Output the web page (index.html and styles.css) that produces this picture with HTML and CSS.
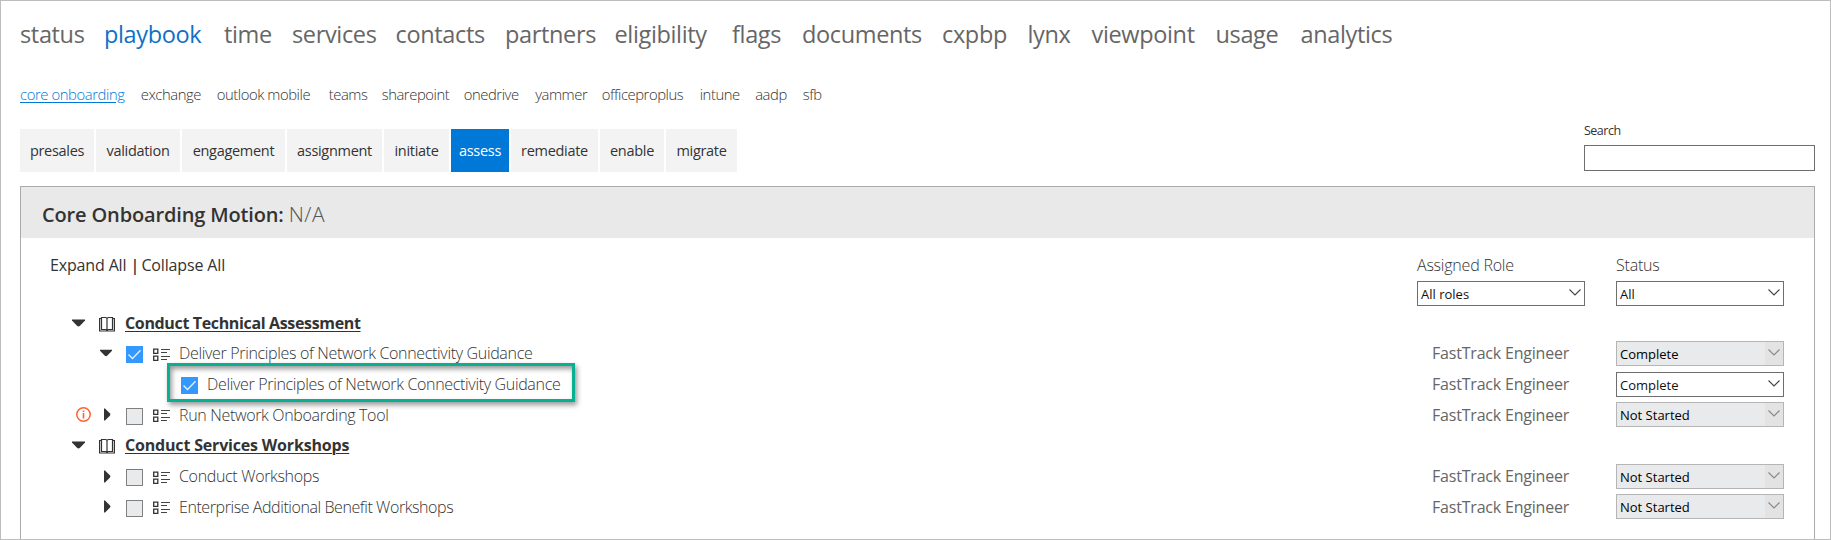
FILE: index.html
```
<!DOCTYPE html>
<html lang="en">
<head>
<meta charset="utf-8">
<title>Playbook</title>
<link rel="stylesheet" href="styles.css">
</head>
<body>
<svg class="defs" width="0" height="0">
  <symbol id="down" viewBox="0 0 13 8"><path d="M0 0.5H13V1.6L8 6.8Q6.5 8 5 6.8L0 1.6Z" fill="#333"/></symbol>
  <symbol id="right" viewBox="0 0 13 13"><path d="M4 .5H5L9.8 5.2Q11 6.5 9.8 7.8L5 12.5H4Z" fill="#333"/></symbol>
  <symbol id="book" viewBox="0 0 16 16"><path d="M2.5 1.5H6.5Q8 1.5 8 3Q8 1.5 9.5 1.5H13.5V13.5H9.5Q8 13.5 8 14.5Q8 13.5 6.5 13.5H2.5ZM8 2V14.5M2.5 2.5H.6V15H15.4V2.5H13.5" fill="none" stroke="#333" stroke-width="1.2"/></symbol>
  <symbol id="list" viewBox="0 0 17 14"><path d="M.7 1.2H4.8V5.3H.7ZM.7 8.2H4.8V12.3H.7Z" fill="none" stroke="#333" stroke-width="1.3"/><path d="M8 1.5H17M8 4.5H14M8 8.5H17M8 11.5H14" stroke="#444" stroke-width="1.1"/></symbol>
  <symbol id="alert" viewBox="0 0 15 15"><circle cx="7.5" cy="7.5" r="6.7" fill="none" stroke="#ff6230" stroke-width="1.5"/><path d="M7.5 3.4V4.9M7.5 5.9V11.6" stroke="#ff6230" stroke-width="1.6"/></symbol>
  <symbol id="chev" viewBox="0 0 12 7"><path d="M.5 .5L6 6L11.5 .5" fill="none" stroke="currentColor" stroke-width="1.1"/></symbol>
  <symbol id="tick" viewBox="0 0 17 17"><path d="M2.5 8.5L6.5 12.5L14.5 4.3" fill="none" stroke="#e4f1ff" stroke-width="1.3"/></symbol>
</svg>
<div class="page">
  <nav class="main-nav">
    <a>status</a><a class="active">playbook</a><a>time</a><a>services</a><a>contacts</a><a>partners</a><a>eligibility</a><a>flags</a><a>documents</a><a>cxpbp</a><a>lynx</a><a>viewpoint</a><a>usage</a><a>analytics</a>
  </nav>
  <nav class="sub-nav">
    <a><span class="current">core onboarding</span></a><a>exchange</a><a>outlook mobile</a><a>teams</a><a>sharepoint</a><a>onedrive</a><a>yammer</a><a>officeproplus</a><a>intune</a><a>aadp</a><a>sfb</a>
  </nav>
  <div class="bar">
    <div class="tabs">
      <a>presales</a><a>validation</a><a>engagement</a><a>assignment</a><a>initiate</a><a class="selected">assess</a><a>remediate</a><a>enable</a><a>migrate</a>
    </div>
    <label class="search">Search<input type="text"></label>
  </div>
  <main class="panel">
    <h1 class="title">Core Onboarding Motion: <span>N/A</span></h1>
    <div class="tools">
      <div class="expand"><a>Expand All</a><b>|</b><a>Collapse All</a></div>
      <div class="filter"><span>Assigned Role</span><div class="select">All roles<svg><use href="#chev"/></svg></div></div>
      <div class="filter"><span>Status</span><div class="select">All<svg><use href="#chev"/></svg></div></div>
    </div>
    <div class="tree">
      <div class="row group"><svg class="down"><use href="#down"/></svg><svg class="book"><use href="#book"/></svg><u>Conduct Technical Assessment</u></div>
      <div class="row task"><svg class="down"><use href="#down"/></svg><i class="check on"><svg><use href="#tick"/></svg></i><svg class="list"><use href="#list"/></svg><span class="name">Deliver Principles of Network Connectivity Guidance</span><span class="role">FastTrack Engineer</span><div class="select off">Complete<svg><use href="#chev"/></svg></div></div>
      <div class="row step"><i class="check on"><svg><use href="#tick"/></svg></i><span class="name">Deliver Principles of Network Connectivity Guidance</span><span class="role">FastTrack Engineer</span><div class="select">Complete<svg><use href="#chev"/></svg></div><div class="highlight"></div></div>
      <div class="row task flagged"><svg class="alert"><use href="#alert"/></svg><svg class="right"><use href="#right"/></svg><i class="check"></i><svg class="list"><use href="#list"/></svg><span class="name">Run Network Onboarding Tool</span><span class="role">FastTrack Engineer</span><div class="select off">Not Started<svg><use href="#chev"/></svg></div></div>
      <div class="row group"><svg class="down"><use href="#down"/></svg><svg class="book"><use href="#book"/></svg><u class="wide">Conduct Services Workshops</u></div>
      <div class="row task"><svg class="right"><use href="#right"/></svg><i class="check focus"></i><svg class="list"><use href="#list"/></svg><span class="name">Conduct Workshops</span><span class="role">FastTrack Engineer</span><div class="select off">Not Started<svg><use href="#chev"/></svg></div></div>
      <div class="row task"><svg class="right"><use href="#right"/></svg><i class="check"></i><svg class="list"><use href="#list"/></svg><span class="name tight">Enterprise Additional Benefit Workshops</span><span class="role">FastTrack Engineer</span><div class="select off">Not Started<svg><use href="#chev"/></svg></div></div>
    </div>
  </main>
</div>
</body>
</html>
```
FILE: styles.css
```
* { box-sizing: border-box; }
body { margin: 0; font-family: "Open Sans", "Noto Sans", sans-serif; color: #333; background: #fff; }
.defs { display: none; }
svg { display: block; flex: none; }
.page { width: 1831px; height: 540px; overflow: hidden; border: 1px solid #bdbdbd; padding: 17px 15px 0 19px; display: flex; flex-direction: column; }

.main-nav { display: grid; grid-template-columns: 84px 120px 68px 103.5px 109.5px 109.5px 117.5px 70px 140px 85.5px 64px 124px 85px auto; justify-content: start; height: 32px; font-size: 23.5px; line-height: 32px; letter-spacing: -.35px; color: #666; white-space: nowrap; }
.main-nav .active { color: #0f70c8; }
.sub-nav { display: grid; grid-template-columns: 120.7px 76px 112px 53px 82px 71.5px 66.5px 98px 55.5px 47.5px auto; justify-content: start; margin-top: 34px; height: 20px; font-size: 14.8px; line-height: 20px; font-weight: 300; letter-spacing: -.43px; color: #333; white-space: nowrap; }
.current { color: #0078d7; text-decoration: underline; text-underline-offset: 2px; letter-spacing: -.4px; }

.bar { display: flex; justify-content: space-between; height: 65px; margin-top: 17px; }
.tabs { display: grid; grid-template-columns: 74px 84px 103px 95px 65px 58px 87px 64px 71px; gap: 2px; height: 42px; margin-top: 8px; font-size: 14.5px; line-height: 43px; letter-spacing: -.3px; text-align: center; }
.tabs a { background: #f3f3f3; }
.tabs .selected { background: #0078d7; color: #fff; }
.search { width: 231px; margin-top: 1px; font-size: 12.5px; line-height: 18px; letter-spacing: -.5px; }
.search input { display: block; width: 231px; height: 26px; margin: 5px 0 0; border: 1px solid #6e6e6e; border-radius: 0; background: #fff; }

.panel { width: 1795px; flex: 1; border: 1px solid #aaa; border-bottom: 0; }
.title { margin: 0; height: 51px; padding-left: 21px; background: #e9e9e9; font-size: 20px; line-height: 55px; font-weight: 600; letter-spacing: -.15px; }
.title span { font-weight: 300; font-size: 21px; letter-spacing: .5px; color: #555; }
.tools { display: flex; height: 69.4px; padding: 16px 30px 0 29px; gap: 31px; font-size: 16px; line-height: 22px; letter-spacing: -.15px; }
.expand { flex: 1; display: flex; gap: 4px; }
.expand b { font-weight: 600; width: 7px; text-align: center; }
.filter { width: 168px; font-weight: 300; letter-spacing: -.22px; }
.filter span { display: block; margin-bottom: 5px; }
.select { flex: none; width: 168px; height: 25px; border: 1px solid #6e6e6e; background: #fff; padding: 1px 2px 0 3px; display: flex; align-items: center; justify-content: space-between; font-size: 13px; font-weight: 400; letter-spacing: 0; line-height: 20px; color: #111; }
.select svg { width: 12px; height: 7px; margin: -3px 1px 0 0; color: #444; }
.off { border-color: #b5b5b5; background: linear-gradient(90deg, #e9eaec 148px, #e3e3e3 148px); color: #000; }
.off svg { color: #888; }

.row { position: relative; display: flex; align-items: center; height: 30.7px; padding-right: 30px; font-size: 16px; line-height: 22px; white-space: nowrap; }
.group { padding-left: 51px; font-weight: 700; letter-spacing: -.35px; }
.group u { text-underline-offset: 2px; text-decoration-thickness: 1px; }
.group .wide { letter-spacing: -.18px; }
.task { padding-left: 79px; }
.flagged { padding-left: 55px; }
.step { padding-left: 160px; }
.down { width: 13px; height: 8px; margin-right: 14px; }
.right { width: 13px; height: 13px; margin-right: 13px; }
.task .down { width: 12px; }
.book { width: 16px; height: 16px; margin: 2px 10px 0 0; }
.alert { width: 15px; height: 15px; margin-right: 9px; }
.list { width: 17px; height: 14px; margin: 3px 9px 0 0; }
.check { width: 17px; height: 17px; margin: 3px 10px 0 0; border: 1px solid #808080; background: #e9eaec; }
.focus { border-top-color: #4a86c5; }
.on { border: 0; background: #3399ff; }
.on svg { width: 17px; height: 17px; }
.step .check { margin-right: 9px; }
.name { flex: 1; font-weight: 300; letter-spacing: -.33px; }
.tight { letter-spacing: -.42px; }
.role { width: 184px; color: #666; letter-spacing: -.2px; }
.highlight { position: absolute; left: 146px; top: -6px; width: 408px; height: 39px; border: 3px solid #06b090; box-shadow: 2px 3px 5px rgba(0,0,0,.4), inset 2px 3px 5px rgba(0,0,0,.4); }
```
